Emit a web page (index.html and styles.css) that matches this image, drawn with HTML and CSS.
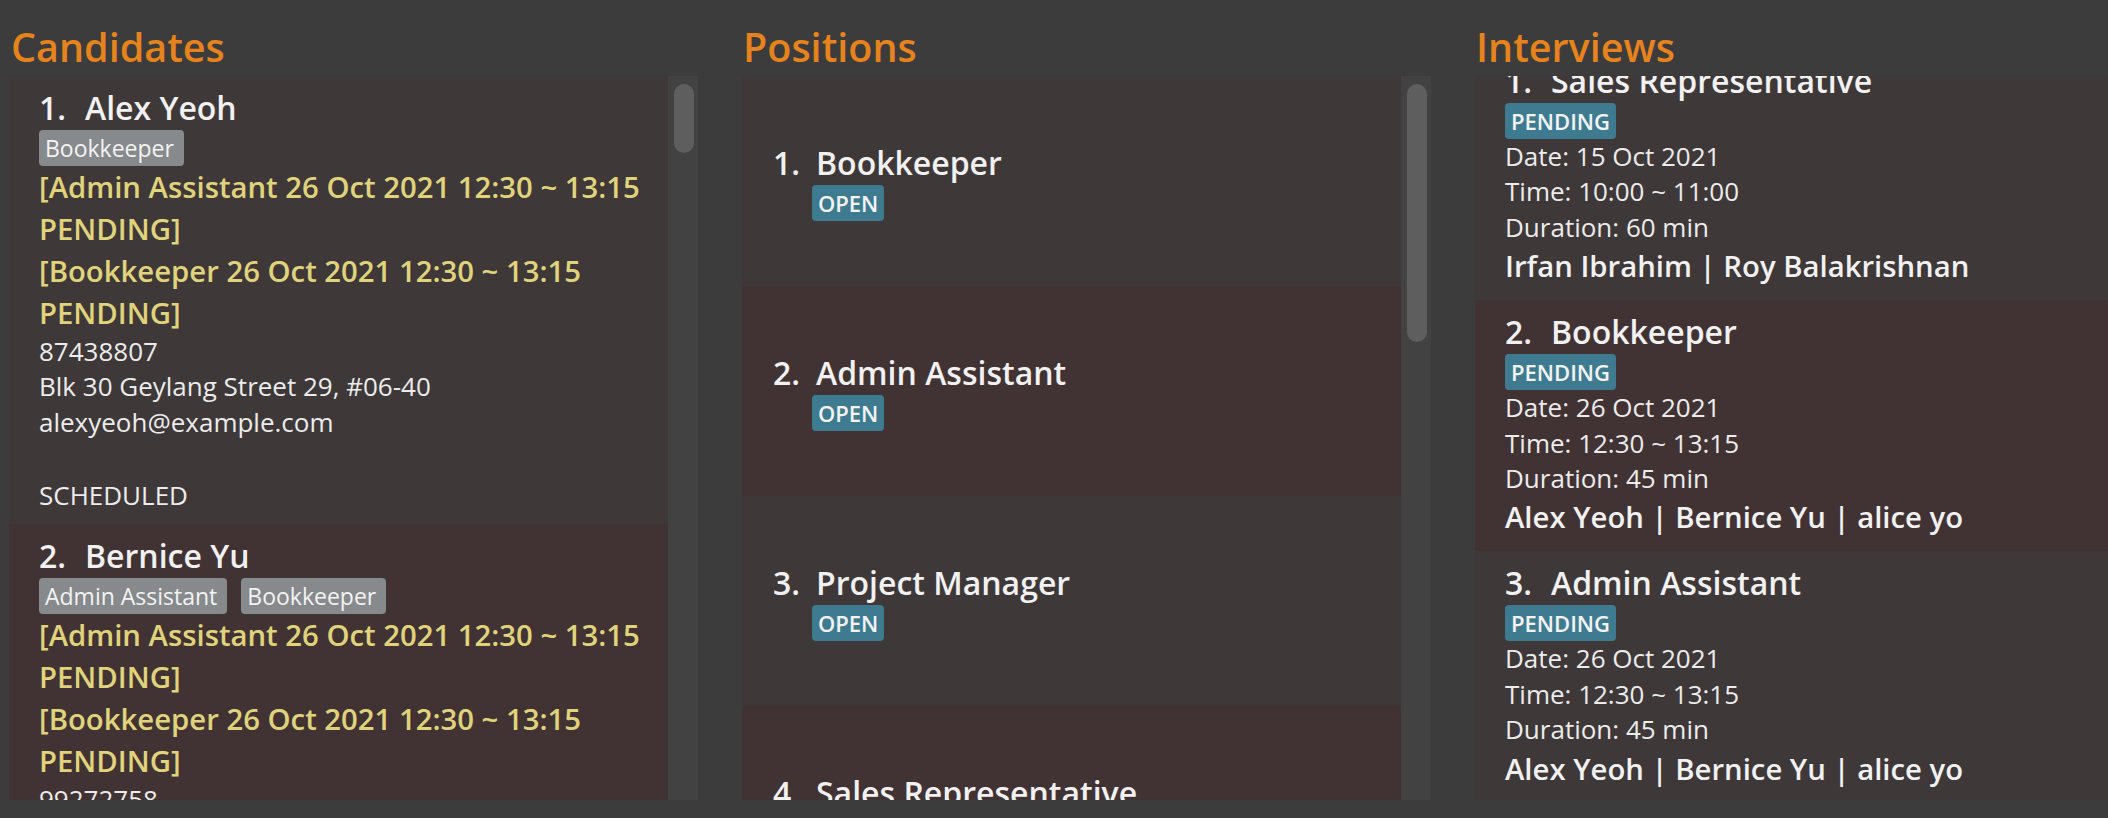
FILE: index.html
```html
<!DOCTYPE html>
<html lang="en">
<head>
<meta charset="utf-8">
<title>HR Manager</title>
<link rel="stylesheet" href="styles.css">
</head>
<body>
<div class="app">
  <section class="column">
    <h1 class="title">Candidates</h1>
    <div class="panel">
      <div class="list">
        <article class="card odd">
          <div class="head"><span class="num">1.</span><span class="name">Alex Yeoh</span></div>
          <div class="tags"><span class="tag">Bookkeeper</span></div>
          <p class="slot">[Admin Assistant 26 Oct 2021 12:30 ~ 13:15 PENDING]</p>
          <p class="slot">[Bookkeeper 26 Oct 2021 12:30 ~ 13:15 PENDING]</p>
          <p class="small">87438807</p>
          <p class="small">Blk 30 Geylang Street 29, #06-40</p>
          <p class="small">alexyeoh@example.com</p>
          <p class="small scheduled">SCHEDULED</p>
        </article>
        <article class="card even">
          <div class="head"><span class="num">2.</span><span class="name">Bernice Yu</span></div>
          <div class="tags"><span class="tag">Admin Assistant</span><span class="tag">Bookkeeper</span></div>
          <p class="slot">[Admin Assistant 26 Oct 2021 12:30 ~ 13:15 PENDING]</p>
          <p class="slot">[Bookkeeper 26 Oct 2021 12:30 ~ 13:15 PENDING]</p>
          <p class="small">99272758</p>
          <p class="small">Blk 30 Lorong 3 Serangoon Gardens, #07-18</p>
          <p class="small">berniceyu@example.com</p>
        </article>
      </div>
      <div class="scrollbar"><div class="thumb" style="height:69px"></div></div>
    </div>
  </section>

  <section class="column">
    <h1 class="title title-pos">Positions</h1>
    <div class="panel">
      <div class="list">
        <article class="pos odd">
          <span class="pos-num">1.</span>
          <div class="pos-body"><span class="name">Bookkeeper</span><span class="badge">OPEN</span></div>
        </article>
        <article class="pos even">
          <span class="pos-num">2.</span>
          <div class="pos-body"><span class="name">Admin Assistant</span><span class="badge">OPEN</span></div>
        </article>
        <article class="pos odd">
          <span class="pos-num">3.</span>
          <div class="pos-body"><span class="name">Project Manager</span><span class="badge">OPEN</span></div>
        </article>
        <article class="pos even">
          <span class="pos-num">4.</span>
          <div class="pos-body"><span class="name">Sales Representative</span><span class="badge">OPEN</span></div>
        </article>
      </div>
      <div class="scrollbar scrollbar-pos"><div class="thumb" style="height:258px"></div></div>
    </div>
  </section>

  <section class="column">
    <h1 class="title title-pos">Interviews</h1>
    <div class="panel">
      <div class="list">
        <div class="scrolled">
          <article class="iv odd">
            <div class="head"><span class="num">1.</span><span class="name">Sales Representative</span></div>
            <div class="badge-row"><span class="badge">PENDING</span></div>
            <p class="small">Date: 15 Oct 2021</p>
            <p class="small">Time: 10:00 ~ 11:00</p>
            <p class="small">Duration: 60 min</p>
            <p class="people">Irfan Ibrahim | Roy Balakrishnan</p>
          </article>
          <article class="iv even">
            <div class="head"><span class="num">2.</span><span class="name">Bookkeeper</span></div>
            <div class="badge-row"><span class="badge">PENDING</span></div>
            <p class="small">Date: 26 Oct 2021</p>
            <p class="small">Time: 12:30 ~ 13:15</p>
            <p class="small">Duration: 45 min</p>
            <p class="people">Alex Yeoh | Bernice Yu | alice yo</p>
          </article>
          <article class="iv odd">
            <div class="head"><span class="num">3.</span><span class="name">Admin Assistant</span></div>
            <div class="badge-row"><span class="badge">PENDING</span></div>
            <p class="small">Date: 26 Oct 2021</p>
            <p class="small">Time: 12:30 ~ 13:15</p>
            <p class="small">Duration: 45 min</p>
            <p class="people">Alex Yeoh | Bernice Yu | alice yo</p>
          </article>
        </div>
      </div>
    </div>
  </section>
</div>
</body>
</html>
```

FILE: styles.css
```css
* {
  box-sizing: border-box;
  margin: 0;
  padding: 0;
}

html, body {
  height: 818px;
  overflow: hidden;
}

body {
  background: #3c3c3c;
  font-family: "Open Sans", "Noto Sans", sans-serif;
  color: #efefef;
}

.app {
  display: flex;
  gap: 44px;
  padding-left: 9px;
}

.column {
  flex: 0 0 689px;
  display: flex;
  flex-direction: column;
}

.title {
  height: 76px;
  padding: 20px 0 0 2px;
  font-size: 39.5px;
  font-weight: 600;
  line-height: 54px;
  color: #e6831d;
}

.title-pos {
  padding-left: 1px;
}

.panel {
  height: 724px;
  display: flex;
  overflow: hidden;
}

.list {
  flex: 1;
  min-width: 0;
  overflow: hidden;
}

.scrollbar {
  flex: 0 0 30px;
  background: #424242;
  padding: 8px 4px 0 6px;
}

.scrollbar-pos {
  flex-basis: 29px;
}

.thumb {
  width: 20px;
  background: #5e5e5e;
  border-radius: 10px;
}

.odd {
  background: #3e3838;
}

.even {
  background: #413333;
}

/* candidate cards */
.card {
  padding: 9px 10px 10px 30px;
  height: 448px;
}

.head {
  display: flex;
  font-size: 32px;
  font-weight: 600;
  line-height: 45px;
  color: #f1f1f1;
  white-space: nowrap;
}

.num {
  flex: none;
  width: 46px;
}

.tags {
  display: flex;
  gap: 14px;
}

.tag {
  font-size: 23px;
  line-height: 30px;
  padding: 3px 10px 3px 6px;
  background: #878a8d;
  border-radius: 4px;
  color: #f3f3f3;
}

.slot {
  font-size: 29.3px;
  font-weight: 600;
  line-height: 42px;
  color: #e0d37c;
}

.small {
  font-size: 26px;
  line-height: 35.4px;
  color: #ececec;
}

.scheduled {
  margin-top: 38px;
}

/* positions */
.pos {
  height: 210px;
  display: flex;
  padding: 64px 0 0 31px;
}

.pos-num {
  flex: none;
  width: 39px;
  font-size: 32px;
  font-weight: 600;
  line-height: 45px;
  color: #f1f1f1;
}

.pos-body {
  display: flex;
  flex-direction: column;
  align-items: flex-start;
}

.pos-body .name {
  font-size: 32px;
  font-weight: 600;
  line-height: 45px;
  padding-left: 4px;
  color: #f1f1f1;
  white-space: nowrap;
}

.badge {
  display: inline-block;
  font-size: 22px;
  font-weight: 600;
  line-height: 30px;
  padding: 3px 6px;
  background: #3e7b91;
  border-radius: 4px;
  color: #f3f3f3;
}

/* interviews */
.scrolled {
  margin-top: -27px;
}

.iv {
  padding: 9px 10px 13px 30px;
}

.badge-row {
  display: flex;
}

.people {
  font-size: 29.3px;
  font-weight: 600;
  line-height: 42px;
  color: #f1f1f1;
  white-space: nowrap;
}
```
